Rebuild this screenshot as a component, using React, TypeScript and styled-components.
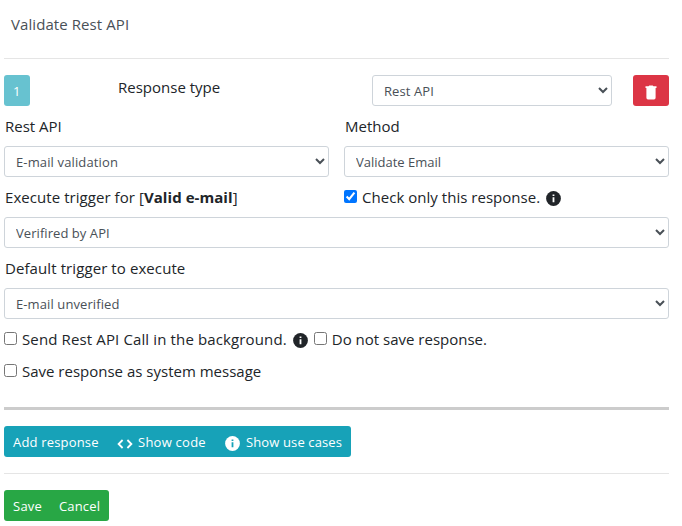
import React from "react";
import styled, { createGlobalStyle } from "styled-components";

const GlobalStyle = createGlobalStyle`
  *, *::before, *::after { box-sizing: border-box; }
  body {
    margin: 0;
    background: #fff;
    color: #212529;
    font: 400 15px/24px "Segoe UI", "Open Sans", "Noto Sans", sans-serif;
  }
`;

const Page = styled.main`
  display: flex;
  flex-direction: column;
  width: 682px;
  height: 526px;
  padding: 0 13px 0 4px;
  overflow: hidden;

  > * { flex-shrink: 0; }
`;

const Title = styled.div`
  height: 58px;
  padding: 12px 7px 0;
  color: #495057;
`;

const Divider = styled.hr<{ $thick?: boolean }>`
  width: 100%;
  height: ${(p) => (p.$thick ? 3 : 1)}px;
  margin: 0;
  border: 0;
  background: ${(p) => (p.$thick ? "#ccc" : "#e5e5e5")};
`;

const ResponseRow = styled.div`
  display: grid;
  grid-template-columns: 114px 254px 240px 1fr;
  align-items: start;
  margin: 16px 0 8px;
`;

const Columns = styled.div`
  display: grid;
  grid-template-columns: 325px 325px;
  column-gap: 15px;
`;

const Field = styled.div`
  display: flex;
  flex-direction: column;
  gap: 8px;
  margin-bottom: 8px;
`;

const Text = styled.span<{ $spacing?: number; $indent?: number }>`
  padding-left: ${(p) => p.$indent ?? 0}px;
  white-space: pre;
  letter-spacing: ${(p) => p.$spacing ?? 0}px;
`;

const Select = styled.select<{ $spacing: number }>`
  width: 100%;
  height: 31px;
  padding: 4px 9px 4px 7px;
  border: 1px solid #ced4da;
  border-radius: 3px;
  background: #fff;
  color: #495057;
  font: 400 13px/21px "Segoe UI", "Open Sans", "Noto Sans", sans-serif;
  letter-spacing: ${(p) => p.$spacing}px;
`;

const Button = styled.button<{ $tone: string; $width: number }>`
  display: inline-flex;
  align-items: center;
  width: ${(p) => p.$width}px;
  height: 31px;
  padding: 2px 0 0 9px;
  border: 0;
  border-radius: 3px;
  background: ${(p) => p.$tone};
  color: #fff;
  font: 400 13px/21px "Segoe UI", "Open Sans", "Noto Sans", sans-serif;
  white-space: nowrap;

  svg { position: relative; top: 1px; }
`;

const NumberBadge = styled(Button)`
  opacity: 0.65;
`;

const DeleteButton = styled(Button)`
  justify-self: end;
  padding-left: 12px;
`;

const Group = styled.div`
  display: inline-flex;
  margin: 16px 0;

  ${Button}:not(:first-child) { border-top-left-radius: 0; border-bottom-left-radius: 0; }
  ${Button}:not(:last-child) { border-top-right-radius: 0; border-bottom-right-radius: 0; }
`;

const CheckRow = styled.div`
  display: flex;
  align-items: center;
  height: 24px;
  margin-bottom: 8px;
`;

const FinalCheckRow = styled(CheckRow)`
  margin-bottom: 24px;
`;

const CheckLabel = styled.label`
  display: inline-flex;
  align-items: center;
  gap: 5px;
`;

const Checkbox = styled.input`
  width: 13px;
  height: 13px;
  margin: 0;
  position: relative;
  top: -1px;
`;

const IconSlot = styled.span`
  display: inline-flex;
  margin: 3px 6px 0 6px;
`;

const InfoIcon = ({ hole }: { hole: string }) => (
  <svg width="15" height="15" viewBox="0 0 15 15">
    <circle cx="7.5" cy="7.5" r="7.4" fill="currentColor" />
    <path d="M6.6 3.5h1.8v1.5H6.6zM6.6 6.2h1.8v5H6.6z" fill={hole} />
  </svg>
);

const CodeIcon = () => (
  <svg width="16" height="10" viewBox="0 0 16 10" fill="none" stroke="currentColor" strokeWidth="1.8">
    <path d="M5.6 1 1.6 5l4 4M10.4 1l4 4-4 4" />
  </svg>
);

const TrashIcon = () => (
  <svg width="12" height="15" viewBox="0 0 12 15" fill="currentColor">
    <path d="M.5 1.3h3L4.3.5h3.4l.8.8h3v1.6h-.9v9.9q0 1.6-1.6 1.6H3q-1.6 0-1.6-1.6V2.9H.5z" />
  </svg>
);

const Check = ({ text, checked, spacing }: { text: string; checked?: boolean; spacing?: number }) => (
  <CheckLabel>
    <Checkbox type="checkbox" defaultChecked={checked} />
    <Text $spacing={spacing}>{text}</Text>
  </CheckLabel>
);

const Picker = ({ value, spacing = 0 }: { value: string; spacing?: number }) => (
  <Select defaultValue={value} $spacing={spacing}>
    <option>{value}</option>
  </Select>
);

const TEAL = "#17a2b8";
const GREEN = "#28a745";

export default function App() {
  return (
    <>
      <GlobalStyle />
      <Page>
        <Title><Text $spacing={0.08}>Validate Rest API</Text></Title>
        <Divider />
        <ResponseRow>
          <NumberBadge $tone={TEAL} $width={26}>1</NumberBadge>
          <Text>Response type</Text>
          <Picker value="Rest API" spacing={0.1} />
          <DeleteButton $tone="#dc3545" $width={36} aria-label="Delete"><TrashIcon /></DeleteButton>
        </ResponseRow>
        <Columns>
          <Field>
            <Text $indent={1}>Rest API</Text>
            <Picker value="E-mail validation" spacing={0.13} />
          </Field>
          <Field>
            <Text $indent={1}>Method</Text>
            <Picker value="Validate Email" />
          </Field>
        </Columns>
        <Columns>
          <Text $indent={1} $spacing={0.06}>Execute trigger for [<b>Valid e-mail</b>]</Text>
          <CheckRow>
            <Check text="Check only this response." checked spacing={0.03} />
            <IconSlot><InfoIcon hole="#fff" /></IconSlot>
          </CheckRow>
        </Columns>
        <Field><Picker value="Verifired by API" spacing={0.06} /></Field>
        <Field>
          <Text $indent={1} $spacing={0.09}>Default trigger to execute</Text>
          <Picker value="E-mail unverified" spacing={0.1} />
        </Field>
        <CheckRow>
          <Check text="Send Rest API Call in the background." spacing={0.13} />
          <IconSlot><InfoIcon hole="#fff" /></IconSlot>
          <Check text="Do not save response." />
        </CheckRow>
        <FinalCheckRow>
          <Check text="Save response as system message" />
        </FinalCheckRow>
        <Divider $thick />
        <Group>
          <Button $tone={TEAL} $width={104}><Text $spacing={0.18}>Add response</Text></Button>
          <Button $tone={TEAL} $width={108}><CodeIcon /><Text $indent={5} $spacing={0.25}>Show code</Text></Button>
          <Button $tone={TEAL} $width={135}><InfoIcon hole={TEAL} /><Text $indent={6} $spacing={0.12}>Show use cases</Text></Button>
        </Group>
        <Divider />
        <Group>
          <Button $tone={GREEN} $width={46}><Text $spacing={0.25}>Save</Text></Button>
          <Button $tone={GREEN} $width={59}><Text $spacing={0.15}>Cancel</Text></Button>
        </Group>
      </Page>
    </>
  );
}
